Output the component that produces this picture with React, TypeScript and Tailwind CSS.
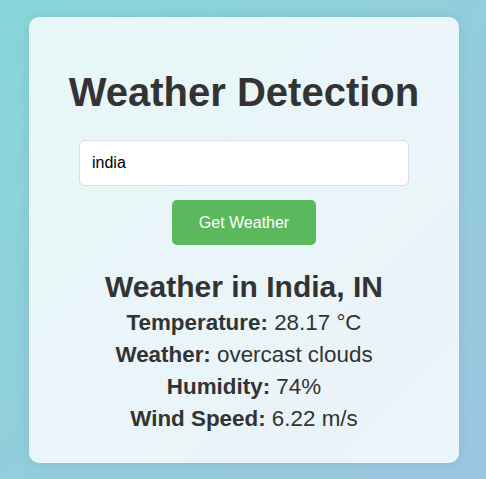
import React from "react";

export default function App() {
  return (
    <div
      className="min-h-screen w-full bg-gradient-to-br from-[#86d6d8] to-[#9bc5e0] flex justify-center pt-[17px] pl-[2px]"
      style={{ fontFamily: '"Liberation Sans", Arial, sans-serif' }}
    >
      <div className="w-[430px] h-[446px] rounded-[10px] bg-white/80 shadow-[0_0_12px_rgba(0,0,0,0.08)] flex flex-col items-center pt-[52px] text-[#333]">
        <h1 className="text-[40px] leading-[46px] font-bold m-0">Weather Detection</h1>
        <input
          defaultValue="india"
          className="mt-[25px] w-[330px] h-[46px] rounded-[6px] border border-[#ddd] bg-white px-[12px] text-[16px] text-black outline-none"
        />
        <button className="mt-[14px] w-[144px] h-[45px] rounded-[5px] bg-[#5cb85c] text-white text-[16px]">
          Get Weather
        </button>
        <h2 className="mt-[26px] text-[30px] leading-[32px] font-bold">Weather in India, IN</h2>
        <div className="mt-[4px] flex flex-col items-center text-[22.4px] leading-[32px]">
          <p><span className="font-bold">Temperature:</span> 28.17 °C</p>
          <p><span className="font-bold">Weather:</span> overcast clouds</p>
          <p><span className="font-bold">Humidity:</span> 74%</p>
          <p><span className="font-bold">Wind Speed:</span> 6.22 m/s</p>
        </div>
      </div>
    </div>
  );
}
